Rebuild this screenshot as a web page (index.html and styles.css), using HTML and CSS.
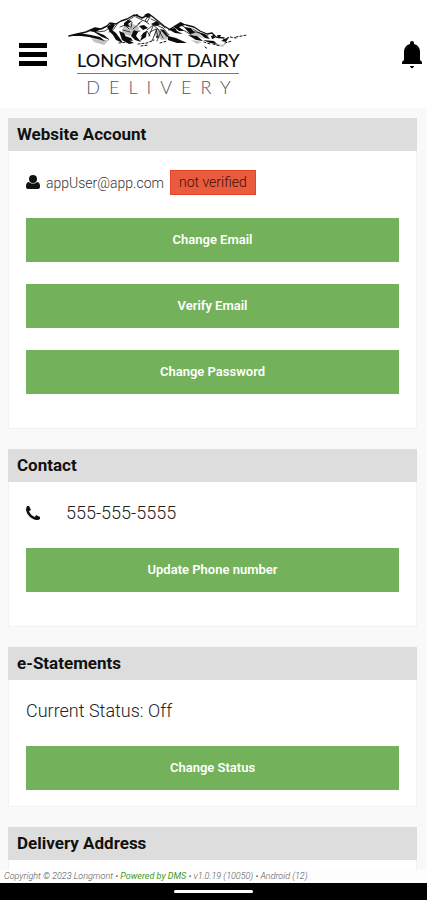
FILE: index.html
```html
<!DOCTYPE html>
<html lang="en">
<head>
<meta charset="utf-8">
<meta name="viewport" content="width=device-width, initial-scale=1">
<title>Longmont Dairy Delivery</title>
<link rel="stylesheet" href="styles.css">
</head>
<body>
<header class="topbar">
  <button class="icon-button" type="button" aria-label="Menu">
    <svg width="30" height="26" viewBox="0 0 30 26" aria-hidden="true"><path d="M1 1h28v5H1zM1 10h28v5H1zM1 19h28v5H1z"/></svg>
  </button>
  <a class="logo" href="#" aria-label="Longmont Dairy Delivery">
    <svg class="peaks" width="182" height="38" viewBox="67 11 182 38" aria-hidden="true">
      <g fill="#999" opacity=".6">
        <path d="M91 38l8 2 10 0-5 5-10-3zM123 27l8-4 8 4-1 6-9 3-7-3zM156 28l9 3 5 8-8 1-8-5zM191 40l11 2-5 2zM186 29l12 4 7 6-12-4zM213 42l9 3 5-3-4 5-8-2z"/>
      </g>
      <g fill="none" stroke="#111" stroke-linejoin="round" stroke-linecap="round">
        <path stroke-width="1.400" d="M69 36l8-2 9-2 9-4 6 1 6-3 3-3 6 1 5-3 6-2 7-4 4 1 4 2 4-2 3-2 4 3 5 4 6 5 5 3"/>
        <path stroke-width="1.300" d="M169 30l6-4 5-3 6 2 8 2 6 4 7 3 5-1 4 4 8 1"/>
        <path stroke-width=".8" d="M118 23l-5 7-4 2M135 16l-8 5-2 4-5 2M136 17l6 3 5 2 3-5M142 21l-4 3M148 16l-3 5 4 3M151 19l8 4 6 5M112 26l-7 5-8 1M147 30l6-5 5 4 5 9M150 32l6-3 2 8M141 36l6-5 3 5M153 26l-4 10M157 29l-5 12M161 31l-4 10M154 24l9 4 6 7M175 27l10 4 8 5M181 25l8 5 10 3M193 29l8 5 7 2M129 29l-4-4M131 28l1-6M133 29l7-6M130 32l-7-2M133 32l7-1"/>
        <path stroke-width="1" stroke-dasharray="2 2" d="M119 43l8-1M138 44l9-1 7-3M141 46l7-1M160 43l7-2M204 42l6 2M213 44l7 2M205 47l3 2M223 40l7-3 6 1M225 43l7-2M236 37l11-2"/>
      </g>
      <g fill="#0c0c0c">
        <path d="M68 36l12-3 5 1 6 1 9 2 5 4-8-2-8-2-8-1zM89 31l6-3 6 1-5 3 8 3 6 5-8-3-8-5zM107 27l5-4 3 2-3 5 4 3 5 7-7-4-4-4zM119 31l5 2 3 6 7 4-5 1-7-4zM113 35l6 2 4 6-7-3zM124 23l4-3 4 1-4 3 2 3-6-1zM131 36l3-6 4 2-2 4 5 6-6-2zM125 36l6 2 2 3-6-1zM144 15l4-2 3 3-3 2zM139 26l5-1 4 3-5 2zM143 33l4-2-1 6-6 4zM151 24l6-3 3 4-5 1zM160 29l4 1 7 9-5-3zM168 36l8 2 11 5-10 0-9-3zM168 29l7-1 2 3 6 3-8-1zM174 27l7-5 4 3-6 2 5 4-5 0zM184 27l7 1 4 5-5 1zM188 35l9 1 6 5-7-1zM198 32l7 2 5 5-5-1zM203 40l11 1 3 3-7-1zM211 36l3-1 1 3-3 1zM217 35l4 0-2 4zM221 41l8-4-3 5z"/>
        <circle cx="137" cy="15" r="1"/><circle cx="157" cy="37" r="1"/>
      </g>
    </svg>
    <span class="logo-name">LONGMONT DAIRY</span>
    <span class="logo-sub">DELIVERY</span>
  </a>
  <button class="icon-button bell" type="button" aria-label="Notifications">
    <svg width="22" height="28" viewBox="0 0 22 28" aria-hidden="true"><path d="M9 3V2a2 2 0 0 1 4 0v1c4 1 6 4 6 8v8l2 2v2H1v-2l2-2v-8c0-4 2-7 6-8zM9 25h4c-1 3-3 3-4 0z"/></svg>
  </button>
</header>

<main class="content">
  <section class="card">
    <h2>Website Account</h2>
    <div class="card-body roomy">
      <p class="account">
        <svg width="14" height="16" viewBox="0 0 14 16" aria-hidden="true"><circle cx="7" cy="4" r="4"/><path d="M3 7c2 2 6 2 8 0 2 0 3 2 3 4v1c0 1-1 2-2 2H2c-1 0-2-1-2-2v-1c0-2 1-4 3-4z"/></svg>
        <span>appUser@app.com</span>
        <span class="tag">not verified</span>
      </p>
      <button class="action" type="button">Change Email</button>
      <button class="action" type="button">Verify Email</button>
      <button class="action" type="button">Change Password</button>
    </div>
  </section>

  <section class="card">
    <h2>Contact</h2>
    <div class="card-body roomy">
      <p class="line phone">
        <svg width="14" height="14" viewBox="0 0 14 14" aria-hidden="true"><path d="M1 0l2 0 2 4-2 1c1 3 3 5 6 6l1-2 4 2v2c-1 1-3 1-4 1C5 13 0 8 0 3z"/></svg>
        <span>555-555-5555</span>
      </p>
      <button class="action" type="button">Update Phone number</button>
    </div>
  </section>

  <section class="card">
    <h2>e-Statements</h2>
    <div class="card-body">
      <p class="line">Current Status: Off</p>
      <button class="action" type="button">Change Status</button>
    </div>
  </section>

  <section class="card">
    <h2>Delivery Address</h2>
    <div class="card-body"></div>
  </section>
</main>

<footer class="legal">Copyright © 2023 Longmont • <a href="#">Powered by DMS</a> • v1.0.19 (10050) • Android (12)</footer>
<div class="system-nav"><span class="handle"></span></div>
</body>
</html>
```
FILE: styles.css
```css
* {
  box-sizing: border-box;
}

body {
  margin: 0;
  height: 100vh;
  display: flex;
  flex-direction: column;
  background: #f9f9f9;
  color: #111;
  font-family: Roboto, "Liberation Sans", sans-serif;
}

h2,
p {
  margin: 0;
}

.topbar {
  display: flex;
  align-items: center;
  flex: none;
  height: 108px;
  padding: 2px 4px 0 18px;
  background: #fff;
}

.icon-button {
  display: flex;
  padding: 0;
  border: 0;
  background: none;
}

.bell {
  margin-left: auto;
}

.logo {
  display: flex;
  flex-direction: column;
  align-items: center;
  margin-left: 19px;
  color: #111;
  font-family: Lato, sans-serif;
  text-decoration: none;
}

.peaks {
  display: block;
}

.logo-name {
  width: 162px;
  padding-bottom: 2px;
  border-bottom: 1px solid #777;
  font-size: 18px;
  font-weight: 500;
  line-height: 22px;
  text-align: center;
  white-space: nowrap;
}

.logo-sub {
  padding-left: 10px;
  color: #555;
  font-size: 18px;
  font-weight: 300;
  letter-spacing: 9px;
  line-height: 26px;
}

.content {
  display: flex;
  flex: 1;
  flex-direction: column;
  gap: 20px;
  min-height: 0;
  padding: 10px 10px 0 8px;
  overflow-y: auto;
  scrollbar-width: none;
}

.card {
  flex: none;
}

.card h2 {
  padding: 0 9px;
  background: #ddd;
  font-size: 17px;
  font-weight: 700;
  line-height: 33px;
}

.card-body {
  display: flex;
  flex-direction: column;
  gap: 22px;
  min-height: 120px;
  padding: 18px 17px 16px;
  border: 1px solid #f2f2f2;
  border-top: 0;
  background: #fff;
}

.roomy {
  padding-bottom: 34px;
}

.account {
  display: flex;
  align-items: center;
  height: 27px;
  gap: 6px;
  color: #333;
  font-size: 14px;
  font-weight: 300;
}

.account svg,
.phone svg {
  flex: none;
  fill: #111;
}

.tag {
  padding: 0 8px;
  border: 1px solid #e8412a;
  background: #ea5a3c;
  color: #3a120c;
  line-height: 23px;
}

.line {
  display: flex;
  align-items: center;
  color: #222;
  font-size: 18px;
  font-weight: 300;
  line-height: 26px;
}

.phone {
  gap: 26px;
}

.action {
  height: 44px;
  padding: 0;
  border: 0;
  background: #73b25a;
  color: #fff;
  font: 600 13px/44px Roboto, "Liberation Sans", sans-serif;
}

.legal {
  flex: none;
  padding: 0 4px;
  background: #fdfdfd;
  color: #555;
  font-size: 9px;
  font-style: italic;
  font-weight: 300;
  line-height: 13px;
  white-space: nowrap;
}

.legal a {
  color: #3d9a26;
  font-weight: 400;
  text-decoration: none;
}

.system-nav {
  display: flex;
  align-items: center;
  justify-content: center;
  flex: none;
  height: 17px;
  background: #000;
}

.handle {
  width: 79px;
  height: 3px;
  border-radius: 2px;
  background: #fff;
}
```
